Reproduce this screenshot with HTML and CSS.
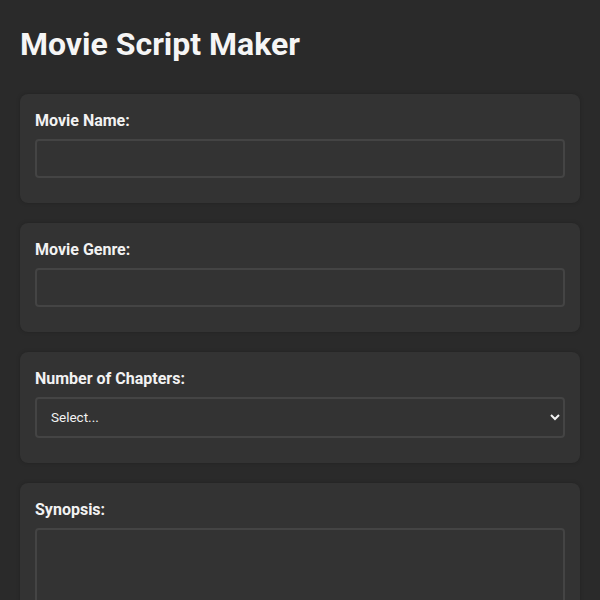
FILE: index.html
```html
<!DOCTYPE html>
<html lang="en">
<head>
<meta charset="utf-8">
<title>Movie Script Maker</title>
<link rel="stylesheet" href="styles.css">
</head>
<body>
<div class="container">
  <h1 class="title">Movie Script Maker</h1>
  <div class="card">
    <label class="label" for="name">Movie Name:</label>
    <input class="field" id="name" type="text">
  </div>
  <div class="card">
    <label class="label" for="genre">Movie Genre:</label>
    <input class="field" id="genre" type="text">
  </div>
  <div class="card">
    <label class="label" for="chapters">Number of Chapters:</label>
    <select class="field select" id="chapters">
      <option>Select...</option>
      <option>1</option>
      <option>2</option>
      <option>3</option>
    </select>
  </div>
  <div class="card">
    <label class="label" for="synopsis">Synopsis:</label>
    <textarea class="field area" id="synopsis"></textarea>
  </div>
</div>
</body>
</html>
```
FILE: styles.css
```css
html, body {
  margin: 0;
  padding: 0;
  background: #2a2a2a;
  color: #f2f2f2;
  font-family: Roboto, "Liberation Sans", sans-serif;
}
.container {
  padding: 20px;
}
.title {
  font-size: 32px;
  font-weight: 700;
  margin: 6px 0 31px;
  line-height: 37px;
  color: #f5f5f5;
}
.card {
  background: #333333;
  border-radius: 8px;
  padding: 17px 15px 25px;
  margin-bottom: 20.5px;
  box-shadow: 0 0 4px rgba(0,0,0,0.2);
}
.label {
  display: block;
  font-size: 16px;
  font-weight: 700;
  line-height: 19px;
  margin-bottom: 8.5px;
}
.field {
  display: block;
  box-sizing: border-box;
  width: 100%;
  height: 39px;
  background: #333333;
  border: 2px solid #444444;
  border-radius: 4px;
  color: #f2f2f2;
  font-family: Roboto, "Liberation Sans", sans-serif;
  font-size: 13.5px;
  padding: 8px 10px;
  margin: 0;
}
.select {
  height: 41px;
}
.area {
  height: 120px;
  resize: vertical;
}
```
